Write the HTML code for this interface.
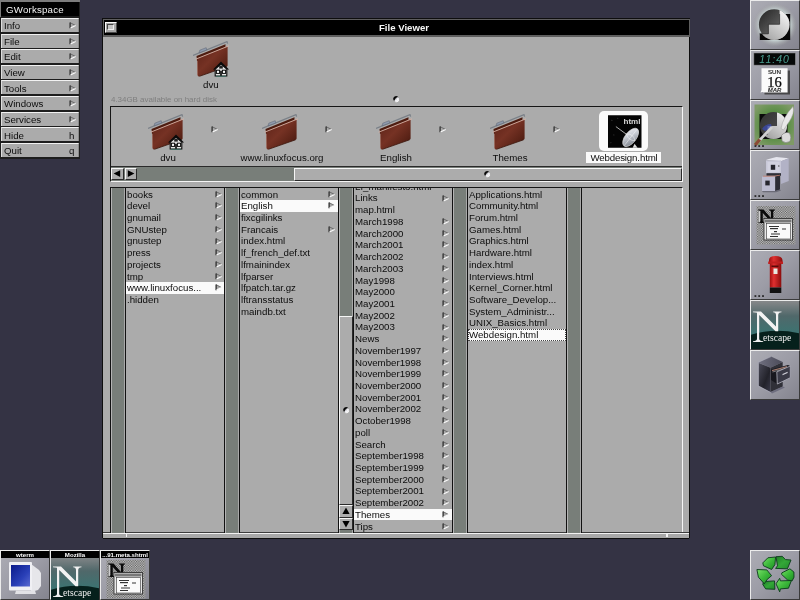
<!DOCTYPE html><html><head><meta charset="utf-8"><style>
*{margin:0;padding:0;box-sizing:border-box}
html,body{width:800px;height:600px;overflow:hidden;background:#343344;font-family:"Liberation Sans",sans-serif}
.a{position:absolute}
svg.a{will-change:transform}
.t{position:absolute;white-space:nowrap;font-size:9.7px;color:#0c0c0c;line-height:1;will-change:transform}
</style></head><body>
<div class="a" style="left:0.00px;top:0.00px;width:79.60px;height:158.60px;background:#1e1e1e"></div>
<div class="a" style="left:0.00px;top:0.00px;width:79.60px;height:2.00px;background:#7c7c7c"></div>
<div class="a" style="left:0.00px;top:0.00px;width:1.40px;height:17.00px;background:#7c7c7c"></div>
<div class="a" style="left:1.40px;top:2.00px;width:77.40px;height:14.30px;background:#000"></div>
<div class="t" style="left:5.60px;top:5.06px;font-size:9.7px;color:#f4f4f4;letter-spacing:0.2px">GWorkspace</div>
<div class="a" style="left:1.20px;top:17.90px;width:77.40px;height:14.00px;background:#ababab;border-top:1.1px solid #f2f2f2;border-left:1px solid #dedede;border-right:1px solid #8a8a8a"></div>
<div class="t" style="left:4.20px;top:21.16px;font-size:9.7px;">Info</div>
<svg class="a" style="left:69.00px;top:22.00px" width="8" height="8" viewBox="0 0 8 8"><path d="M1 0.5 L6.6 3.4 L1 6.3Z" fill="#a8a8a8"/><path d="M1.1 0.7 L6 3.2" stroke="#5a5a5a" stroke-width="0.8" fill="none"/><path d="M1.1 0.4 L1.1 6.3" stroke="#2e2e2e" stroke-width="1.3" fill="none"/><path d="M1.5 6.0 L6.6 3.4" stroke="#fafafa" stroke-width="1.1" fill="none"/></svg>
<div class="a" style="left:1.20px;top:33.52px;width:77.40px;height:14.00px;background:#ababab;border-top:1.1px solid #f2f2f2;border-left:1px solid #dedede;border-right:1px solid #8a8a8a"></div>
<div class="t" style="left:4.20px;top:36.78px;font-size:9.7px;">File</div>
<svg class="a" style="left:69.00px;top:37.62px" width="8" height="8" viewBox="0 0 8 8"><path d="M1 0.5 L6.6 3.4 L1 6.3Z" fill="#a8a8a8"/><path d="M1.1 0.7 L6 3.2" stroke="#5a5a5a" stroke-width="0.8" fill="none"/><path d="M1.1 0.4 L1.1 6.3" stroke="#2e2e2e" stroke-width="1.3" fill="none"/><path d="M1.5 6.0 L6.6 3.4" stroke="#fafafa" stroke-width="1.1" fill="none"/></svg>
<div class="a" style="left:1.20px;top:49.15px;width:77.40px;height:14.00px;background:#ababab;border-top:1.1px solid #f2f2f2;border-left:1px solid #dedede;border-right:1px solid #8a8a8a"></div>
<div class="t" style="left:4.20px;top:52.41px;font-size:9.7px;">Edit</div>
<svg class="a" style="left:69.00px;top:53.25px" width="8" height="8" viewBox="0 0 8 8"><path d="M1 0.5 L6.6 3.4 L1 6.3Z" fill="#a8a8a8"/><path d="M1.1 0.7 L6 3.2" stroke="#5a5a5a" stroke-width="0.8" fill="none"/><path d="M1.1 0.4 L1.1 6.3" stroke="#2e2e2e" stroke-width="1.3" fill="none"/><path d="M1.5 6.0 L6.6 3.4" stroke="#fafafa" stroke-width="1.1" fill="none"/></svg>
<div class="a" style="left:1.20px;top:64.78px;width:77.40px;height:14.00px;background:#ababab;border-top:1.1px solid #f2f2f2;border-left:1px solid #dedede;border-right:1px solid #8a8a8a"></div>
<div class="t" style="left:4.20px;top:68.03px;font-size:9.7px;">View</div>
<svg class="a" style="left:69.00px;top:68.88px" width="8" height="8" viewBox="0 0 8 8"><path d="M1 0.5 L6.6 3.4 L1 6.3Z" fill="#a8a8a8"/><path d="M1.1 0.7 L6 3.2" stroke="#5a5a5a" stroke-width="0.8" fill="none"/><path d="M1.1 0.4 L1.1 6.3" stroke="#2e2e2e" stroke-width="1.3" fill="none"/><path d="M1.5 6.0 L6.6 3.4" stroke="#fafafa" stroke-width="1.1" fill="none"/></svg>
<div class="a" style="left:1.20px;top:80.40px;width:77.40px;height:14.00px;background:#ababab;border-top:1.1px solid #f2f2f2;border-left:1px solid #dedede;border-right:1px solid #8a8a8a"></div>
<div class="t" style="left:4.20px;top:83.66px;font-size:9.7px;">Tools</div>
<svg class="a" style="left:69.00px;top:84.50px" width="8" height="8" viewBox="0 0 8 8"><path d="M1 0.5 L6.6 3.4 L1 6.3Z" fill="#a8a8a8"/><path d="M1.1 0.7 L6 3.2" stroke="#5a5a5a" stroke-width="0.8" fill="none"/><path d="M1.1 0.4 L1.1 6.3" stroke="#2e2e2e" stroke-width="1.3" fill="none"/><path d="M1.5 6.0 L6.6 3.4" stroke="#fafafa" stroke-width="1.1" fill="none"/></svg>
<div class="a" style="left:1.20px;top:96.03px;width:77.40px;height:14.00px;background:#ababab;border-top:1.1px solid #f2f2f2;border-left:1px solid #dedede;border-right:1px solid #8a8a8a"></div>
<div class="t" style="left:4.20px;top:99.28px;font-size:9.7px;">Windows</div>
<svg class="a" style="left:69.00px;top:100.12px" width="8" height="8" viewBox="0 0 8 8"><path d="M1 0.5 L6.6 3.4 L1 6.3Z" fill="#a8a8a8"/><path d="M1.1 0.7 L6 3.2" stroke="#5a5a5a" stroke-width="0.8" fill="none"/><path d="M1.1 0.4 L1.1 6.3" stroke="#2e2e2e" stroke-width="1.3" fill="none"/><path d="M1.5 6.0 L6.6 3.4" stroke="#fafafa" stroke-width="1.1" fill="none"/></svg>
<div class="a" style="left:1.20px;top:111.65px;width:77.40px;height:14.00px;background:#ababab;border-top:1.1px solid #f2f2f2;border-left:1px solid #dedede;border-right:1px solid #8a8a8a"></div>
<div class="t" style="left:4.20px;top:114.91px;font-size:9.7px;">Services</div>
<svg class="a" style="left:69.00px;top:115.75px" width="8" height="8" viewBox="0 0 8 8"><path d="M1 0.5 L6.6 3.4 L1 6.3Z" fill="#a8a8a8"/><path d="M1.1 0.7 L6 3.2" stroke="#5a5a5a" stroke-width="0.8" fill="none"/><path d="M1.1 0.4 L1.1 6.3" stroke="#2e2e2e" stroke-width="1.3" fill="none"/><path d="M1.5 6.0 L6.6 3.4" stroke="#fafafa" stroke-width="1.1" fill="none"/></svg>
<div class="a" style="left:1.20px;top:127.28px;width:77.40px;height:14.00px;background:#ababab;border-top:1.1px solid #f2f2f2;border-left:1px solid #dedede;border-right:1px solid #8a8a8a"></div>
<div class="t" style="left:4.20px;top:130.53px;font-size:9.7px;">Hide</div>
<div class="t" style="left:69.20px;top:130.53px;font-size:9.7px;">h</div>
<div class="a" style="left:1.20px;top:142.90px;width:77.40px;height:14.00px;background:#ababab;border-top:1.1px solid #f2f2f2;border-left:1px solid #dedede;border-right:1px solid #8a8a8a"></div>
<div class="t" style="left:4.20px;top:146.16px;font-size:9.7px;">Quit</div>
<div class="t" style="left:69.20px;top:146.16px;font-size:9.7px;">q</div>
<div class="a" style="left:102.40px;top:18.40px;width:587.80px;height:520.00px;background:#0e0e0e"></div>
<div class="a" style="left:103.00px;top:18.90px;width:586.60px;height:17.80px;background:#5e5e5e"></div>
<div class="a" style="left:104.00px;top:20.20px;width:584.60px;height:15.00px;background:#000"></div>
<div class="t" style="left:378.60px;top:23.04px;font-size:9.6px;color:#f6f6f6;font-weight:bold">File Viewer</div>
<div class="a" style="left:105.00px;top:21.60px;width:11.50px;height:11.00px;background:#a8a8a8;border-top:1px solid #fafafa;border-left:1px solid #fafafa;border-bottom:1px solid #4a4a4a;border-right:1px solid #4a4a4a"></div>
<div class="a" style="left:107.30px;top:24.20px;width:7.00px;height:5.60px;background:#c4c4c4;border-top:1px solid #444;border-left:1px solid #444;border-bottom:1px solid #eee;border-right:1px solid #eee"></div>
<div class="a" style="left:103.00px;top:36.80px;width:586.40px;height:496.00px;background:#ababab"></div>
<div class="a" style="left:103.00px;top:532.00px;width:586.40px;height:6.50px;background:#a8a8a8;border-top:1px solid #3c3c3c;border-bottom:1.2px solid #0e0e0e"></div>
<div class="a" style="left:103.00px;top:533.20px;width:586.40px;height:1.10px;background:#f2f2f2"></div>
<div class="a" style="left:125.80px;top:533.20px;width:1.20px;height:4.30px;background:#f2f2f2"></div>
<div class="a" style="left:665.60px;top:533.20px;width:0.80px;height:4.30px;background:#444"></div>
<div class="a" style="left:666.40px;top:533.20px;width:1.20px;height:4.30px;background:#f2f2f2"></div>
<svg width="0" height="0" style="position:absolute"><defs>
<linearGradient id="fg" x1="0" y1="0" x2="1" y2="1"><stop offset="0" stop-color="#5a2216"/><stop offset="0.45" stop-color="#763224"/><stop offset="1" stop-color="#42160c"/></linearGradient>
<symbol id="folder" viewBox="0 0 36 36">
<path d="M3.5 15 L32.5 3.2 L32.5 9 L4 20Z" fill="#4e1c10"/>
<path d="M0 14.5 L34 0.6 L34.6 2.6" stroke="#7a8088" stroke-width="1.2" fill="none"/>
<path d="M6 11.8 L6.8 9.2 L13.2 6.7 L13.8 9Z" fill="#8e9aac" stroke="#5a6070" stroke-width="0.5"/>
<path d="M4.4 17.4 L34.6 5.2 L34.6 24.6 Q34.6 25.4 33.6 25.8 L6.4 35.3 Q4.6 35.8 4.6 34Z" fill="url(#fg)"/>
<path d="M4.6 20 L4.6 34" stroke="#a05a48" stroke-width="0.6" opacity="0.7"/>
<path d="M2.6 18.2 L37 4.4" stroke="#d8b4a8" stroke-width="0.9"/>
<path d="M6.4 35.3 L33.6 25.8" stroke="#3a140a" stroke-width="0.8"/>
</symbol>
<symbol id="house" viewBox="0 0 16 16">
<path d="M0 8.6 L8 0.6 L16 8.6 L13.8 8.6 L8 3.4 L2.2 8.6Z" fill="#0a0a0a"/>
<path d="M2.2 8.2 L8 3 L13.8 8.2 L13.8 15 L2.2 15Z" fill="#e4e4e4" stroke="#0a0a0a" stroke-width="1.1"/>
<path d="M6.2 4.6 L9.8 4.6 L9.8 7.6 L6.2 7.6Z" fill="#222"/>
<rect x="3.4" y="9.2" width="3.2" height="3.2" fill="#fafafa" stroke="#0a0a0a" stroke-width="1"/>
<rect x="9.4" y="9.2" width="3.2" height="3.2" fill="#fafafa" stroke="#0a0a0a" stroke-width="1"/>
<rect x="7.1" y="9.8" width="1.8" height="5.2" fill="#1a1a1a"/>
<path d="M3 15.3 L13 15.3" stroke="#3a6a60" stroke-width="1"/>
</symbol>
<symbol id="dimple" viewBox="0 0 8 8"><circle cx="4.2" cy="4.2" r="2.4" fill="#c8c8cc"/><path d="M1.4 4.9 A2.8 2.8 0 0 1 6.2 2.1 Q3.8 2.2 2.4 5.8 Q1.7 5.4 1.4 4.9Z" fill="#080808"/><path d="M3.2 6.9 A2.7 2.7 0 0 0 6.9 3.4 Q6.6 5.6 3.2 6.9Z" fill="#fafafa"/><path d="M3 6.2 Q5.8 5.4 6.3 3" stroke="#f4f4f8" stroke-width="1.4" fill="none"/></symbol>
</defs></svg>
<svg class="a" style="left:192.50px;top:41.00px" width="36" height="36" viewBox="0 0 36 36"><use href="#folder"/></svg>
<svg class="a" style="left:212.80px;top:60.80px" width="16" height="16" viewBox="0 0 16 16"><use href="#house"/></svg>
<div class="t" style="left:202.80px;top:80.35px;font-size:9.7px;">dvu</div>
<div class="t" style="left:110.70px;top:95.54px;font-size:7.95px;color:#7e7e7e">4.34GB available on hard disk</div>
<svg class="a" style="left:392.00px;top:95.00px" width="8" height="8" viewBox="0 0 8 8"><use href="#dimple"/></svg>
<div class="a" style="left:110.00px;top:106.00px;width:572.60px;height:76.00px;border-top:1px solid #161616;border-left:1px solid #161616;border-bottom:1px solid #f6f6f6;border-right:1px solid #f6f6f6"></div>
<svg class="a" style="left:148.00px;top:114.00px" width="36" height="36" viewBox="0 0 36 36"><use href="#folder"/></svg>
<svg class="a" style="left:168.30px;top:133.80px" width="16" height="16" viewBox="0 0 16 16"><use href="#house"/></svg>
<div class="t" style="left:167.50px;top:152.95px;transform:translateX(-50%)">dvu</div>
<svg class="a" style="left:211.00px;top:126.00px" width="8" height="8" viewBox="0 0 8 8"><path d="M1 0.5 L6.6 3.4 L1 6.3Z" fill="#a8a8a8"/><path d="M1.1 0.7 L6 3.2" stroke="#5a5a5a" stroke-width="0.8" fill="none"/><path d="M1.1 0.4 L1.1 6.3" stroke="#2e2e2e" stroke-width="1.3" fill="none"/><path d="M1.5 6.0 L6.6 3.4" stroke="#fafafa" stroke-width="1.1" fill="none"/></svg>
<svg class="a" style="left:262.00px;top:114.00px" width="36" height="36" viewBox="0 0 36 36"><use href="#folder"/></svg>
<div class="t" style="left:281.50px;top:152.95px;transform:translateX(-50%)">www.linuxfocus.org</div>
<svg class="a" style="left:325.00px;top:126.00px" width="8" height="8" viewBox="0 0 8 8"><path d="M1 0.5 L6.6 3.4 L1 6.3Z" fill="#a8a8a8"/><path d="M1.1 0.7 L6 3.2" stroke="#5a5a5a" stroke-width="0.8" fill="none"/><path d="M1.1 0.4 L1.1 6.3" stroke="#2e2e2e" stroke-width="1.3" fill="none"/><path d="M1.5 6.0 L6.6 3.4" stroke="#fafafa" stroke-width="1.1" fill="none"/></svg>
<svg class="a" style="left:376.00px;top:114.00px" width="36" height="36" viewBox="0 0 36 36"><use href="#folder"/></svg>
<div class="t" style="left:395.50px;top:152.95px;transform:translateX(-50%)">English</div>
<svg class="a" style="left:439.00px;top:126.00px" width="8" height="8" viewBox="0 0 8 8"><path d="M1 0.5 L6.6 3.4 L1 6.3Z" fill="#a8a8a8"/><path d="M1.1 0.7 L6 3.2" stroke="#5a5a5a" stroke-width="0.8" fill="none"/><path d="M1.1 0.4 L1.1 6.3" stroke="#2e2e2e" stroke-width="1.3" fill="none"/><path d="M1.5 6.0 L6.6 3.4" stroke="#fafafa" stroke-width="1.1" fill="none"/></svg>
<svg class="a" style="left:490.00px;top:114.00px" width="36" height="36" viewBox="0 0 36 36"><use href="#folder"/></svg>
<div class="t" style="left:509.50px;top:152.95px;transform:translateX(-50%)">Themes</div>
<svg class="a" style="left:553.00px;top:126.00px" width="8" height="8" viewBox="0 0 8 8"><path d="M1 0.5 L6.6 3.4 L1 6.3Z" fill="#a8a8a8"/><path d="M1.1 0.7 L6 3.2" stroke="#5a5a5a" stroke-width="0.8" fill="none"/><path d="M1.1 0.4 L1.1 6.3" stroke="#2e2e2e" stroke-width="1.3" fill="none"/><path d="M1.5 6.0 L6.6 3.4" stroke="#fafafa" stroke-width="1.1" fill="none"/></svg>
<div class="a" style="left:599.40px;top:111.40px;width:49.00px;height:39.30px;background:#fafafa;border-radius:5px"></div>
<svg class="a" style="left:608.00px;top:115.00px" width="33.5" height="33" viewBox="0 0 34 33"><defs><linearGradient id="dg" x1="0" y1="1" x2="1" y2="0"><stop offset="0" stop-color="#707680"/><stop offset="0.6" stop-color="#c8ccd4"/><stop offset="1" stop-color="#f0f0f4"/></linearGradient></defs><rect width="34" height="33" fill="#040404"/><circle cx="4" cy="5" r="0.4" fill="#aaa"/><circle cx="10" cy="3" r="0.35" fill="#999"/><circle cx="6" cy="20" r="0.4" fill="#888"/><circle cx="3" cy="28" r="0.35" fill="#999"/><circle cx="17" cy="8" r="0.35" fill="#888"/><text x="33" y="8.6" font-family="Liberation Sans" font-weight="bold" font-size="8.2" fill="#d8d8d8" text-anchor="end">html</text><path d="M8 11.5 L23 22.5" stroke="#dcdcdc" stroke-width="0.8"/><g transform="rotate(-52 23 22.5)"><ellipse cx="23" cy="22.5" rx="11" ry="5.6" fill="url(#dg)" stroke="#e8e8e8" stroke-width="0.6"/><path d="M12.5 22.5 L33.5 22.5 M23 17 Q19 22.5 23 28 M23 17 Q28 22.5 23 28" stroke="#fafafa" stroke-width="0.45" fill="none"/></g><path d="M25 33 L27 29 L30 33Z" fill="#ddd"/></svg>
<div class="a" style="left:586.00px;top:152.00px;width:75.00px;height:10.70px;background:#fafafa"></div>
<div class="t" style="left:623.50px;top:152.95px;transform:translateX(-50%);letter-spacing:-0.15px">Webdesign.html</div>
<div class="a" style="left:111.00px;top:166.20px;width:571.00px;height:1.00px;background:#2a2a2a"></div>
<div class="a" style="left:111.00px;top:167.20px;width:571.00px;height:13.80px;background:#787e79"></div>
<div class="a" style="left:111.20px;top:167.60px;width:12.60px;height:12.80px;background:#acacac;border-top:1px solid #f6f6f6;border-left:1px solid #f6f6f6;border-bottom:1.2px solid #2a2a2a;border-right:1.2px solid #2a2a2a;"></div>
<svg class="a" style="left:113.20px;top:170.20px" width="8" height="8" viewBox="0 0 8 8"><path d="M0.6 3.6 L7.2 0.2 L7.2 7.0Z" fill="#000"/></svg>
<div class="a" style="left:124.70px;top:167.60px;width:12.60px;height:12.80px;background:#acacac;border-top:1px solid #f6f6f6;border-left:1px solid #f6f6f6;border-bottom:1.2px solid #2a2a2a;border-right:1.2px solid #2a2a2a;"></div>
<svg class="a" style="left:127.10px;top:170.20px" width="8" height="8" viewBox="0 0 8 8"><path d="M7.4 3.6 L0.8 0.2 L0.8 7.0Z" fill="#000"/></svg>
<div class="a" style="left:293.70px;top:167.80px;width:388.60px;height:12.80px;background:#acacac;border-top:1px solid #f6f6f6;border-left:1px solid #f6f6f6;border-bottom:1.2px solid #2a2a2a;border-right:1.2px solid #2a2a2a;"></div>
<svg class="a" style="left:483.00px;top:169.60px" width="8" height="8" viewBox="0 0 8 8"><use href="#dimple"/></svg>
<div class="a" style="left:110.00px;top:187.00px;width:572.60px;height:345.20px;border-top:1px solid #161616;border-left:1px solid #161616;border-right:1px solid #f6f6f6"></div>
<div class="a" style="left:110.00px;top:188.00px;width:1.00px;height:344.60px;background:#111"></div>
<div class="a" style="left:111.00px;top:188.00px;width:14.00px;height:344.60px;background:#787e79;border-left:1px solid #b4b4b4;border-right:1px solid #a8a8a8"></div>
<div class="a" style="left:125.00px;top:188.00px;width:1.00px;height:344.60px;background:#111"></div>
<div class="a" style="left:126.00px;top:188.00px;width:98.00px;height:344.60px;overflow:hidden">
<div class="t" style="left:1px;top:1.56px">books</div>
<svg class="a" style="left:88.50px;top:2.70px" width="8" height="8" viewBox="0 0 8 8"><path d="M1 0.5 L6.6 3.4 L1 6.3Z" fill="#a8a8a8"/><path d="M1.1 0.7 L6 3.2" stroke="#5a5a5a" stroke-width="0.8" fill="none"/><path d="M1.1 0.4 L1.1 6.3" stroke="#2e2e2e" stroke-width="1.3" fill="none"/><path d="M1.5 6.0 L6.6 3.4" stroke="#fafafa" stroke-width="1.1" fill="none"/></svg>
<div class="t" style="left:1px;top:13.28px">devel</div>
<svg class="a" style="left:88.50px;top:14.42px" width="8" height="8" viewBox="0 0 8 8"><path d="M1 0.5 L6.6 3.4 L1 6.3Z" fill="#a8a8a8"/><path d="M1.1 0.7 L6 3.2" stroke="#5a5a5a" stroke-width="0.8" fill="none"/><path d="M1.1 0.4 L1.1 6.3" stroke="#2e2e2e" stroke-width="1.3" fill="none"/><path d="M1.5 6.0 L6.6 3.4" stroke="#fafafa" stroke-width="1.1" fill="none"/></svg>
<div class="t" style="left:1px;top:25.00px">gnumail</div>
<svg class="a" style="left:88.50px;top:26.14px" width="8" height="8" viewBox="0 0 8 8"><path d="M1 0.5 L6.6 3.4 L1 6.3Z" fill="#a8a8a8"/><path d="M1.1 0.7 L6 3.2" stroke="#5a5a5a" stroke-width="0.8" fill="none"/><path d="M1.1 0.4 L1.1 6.3" stroke="#2e2e2e" stroke-width="1.3" fill="none"/><path d="M1.5 6.0 L6.6 3.4" stroke="#fafafa" stroke-width="1.1" fill="none"/></svg>
<div class="t" style="left:1px;top:36.72px">GNUstep</div>
<svg class="a" style="left:88.50px;top:37.86px" width="8" height="8" viewBox="0 0 8 8"><path d="M1 0.5 L6.6 3.4 L1 6.3Z" fill="#a8a8a8"/><path d="M1.1 0.7 L6 3.2" stroke="#5a5a5a" stroke-width="0.8" fill="none"/><path d="M1.1 0.4 L1.1 6.3" stroke="#2e2e2e" stroke-width="1.3" fill="none"/><path d="M1.5 6.0 L6.6 3.4" stroke="#fafafa" stroke-width="1.1" fill="none"/></svg>
<div class="t" style="left:1px;top:48.44px">gnustep</div>
<svg class="a" style="left:88.50px;top:49.58px" width="8" height="8" viewBox="0 0 8 8"><path d="M1 0.5 L6.6 3.4 L1 6.3Z" fill="#a8a8a8"/><path d="M1.1 0.7 L6 3.2" stroke="#5a5a5a" stroke-width="0.8" fill="none"/><path d="M1.1 0.4 L1.1 6.3" stroke="#2e2e2e" stroke-width="1.3" fill="none"/><path d="M1.5 6.0 L6.6 3.4" stroke="#fafafa" stroke-width="1.1" fill="none"/></svg>
<div class="t" style="left:1px;top:60.16px">press</div>
<svg class="a" style="left:88.50px;top:61.30px" width="8" height="8" viewBox="0 0 8 8"><path d="M1 0.5 L6.6 3.4 L1 6.3Z" fill="#a8a8a8"/><path d="M1.1 0.7 L6 3.2" stroke="#5a5a5a" stroke-width="0.8" fill="none"/><path d="M1.1 0.4 L1.1 6.3" stroke="#2e2e2e" stroke-width="1.3" fill="none"/><path d="M1.5 6.0 L6.6 3.4" stroke="#fafafa" stroke-width="1.1" fill="none"/></svg>
<div class="t" style="left:1px;top:71.88px">projects</div>
<svg class="a" style="left:88.50px;top:73.02px" width="8" height="8" viewBox="0 0 8 8"><path d="M1 0.5 L6.6 3.4 L1 6.3Z" fill="#a8a8a8"/><path d="M1.1 0.7 L6 3.2" stroke="#5a5a5a" stroke-width="0.8" fill="none"/><path d="M1.1 0.4 L1.1 6.3" stroke="#2e2e2e" stroke-width="1.3" fill="none"/><path d="M1.5 6.0 L6.6 3.4" stroke="#fafafa" stroke-width="1.1" fill="none"/></svg>
<div class="t" style="left:1px;top:83.60px">tmp</div>
<svg class="a" style="left:88.50px;top:84.74px" width="8" height="8" viewBox="0 0 8 8"><path d="M1 0.5 L6.6 3.4 L1 6.3Z" fill="#a8a8a8"/><path d="M1.1 0.7 L6 3.2" stroke="#5a5a5a" stroke-width="0.8" fill="none"/><path d="M1.1 0.4 L1.1 6.3" stroke="#2e2e2e" stroke-width="1.3" fill="none"/><path d="M1.5 6.0 L6.6 3.4" stroke="#fafafa" stroke-width="1.1" fill="none"/></svg>
<div class="a" style="left:0;top:94.06px;width:98.00px;height:11.72px;background:#fafafa;"></div>
<div class="t" style="left:1px;top:95.31px">www.linuxfocus...</div>
<svg class="a" style="left:88.50px;top:96.46px" width="8" height="8" viewBox="0 0 8 8"><path d="M1 0.5 L6.6 3.4 L1 6.3Z" fill="#a8a8a8"/><path d="M1.1 0.7 L6 3.2" stroke="#5a5a5a" stroke-width="0.8" fill="none"/><path d="M1.1 0.4 L1.1 6.3" stroke="#2e2e2e" stroke-width="1.3" fill="none"/><path d="M1.5 6.0 L6.6 3.4" stroke="#fafafa" stroke-width="1.1" fill="none"/></svg>
<div class="t" style="left:1px;top:107.04px">.hidden</div>
</div>
<div class="a" style="left:224.00px;top:188.00px;width:1.00px;height:344.60px;background:#111"></div>
<div class="a" style="left:225.00px;top:188.00px;width:14.00px;height:344.60px;background:#787e79;border-left:1px solid #b4b4b4;border-right:1px solid #a8a8a8"></div>
<div class="a" style="left:239.00px;top:188.00px;width:1.00px;height:344.60px;background:#111"></div>
<div class="a" style="left:240.00px;top:188.00px;width:97.90px;height:344.60px;overflow:hidden">
<div class="t" style="left:1px;top:1.56px">common</div>
<svg class="a" style="left:88.40px;top:2.70px" width="8" height="8" viewBox="0 0 8 8"><path d="M1 0.5 L6.6 3.4 L1 6.3Z" fill="#a8a8a8"/><path d="M1.1 0.7 L6 3.2" stroke="#5a5a5a" stroke-width="0.8" fill="none"/><path d="M1.1 0.4 L1.1 6.3" stroke="#2e2e2e" stroke-width="1.3" fill="none"/><path d="M1.5 6.0 L6.6 3.4" stroke="#fafafa" stroke-width="1.1" fill="none"/></svg>
<div class="a" style="left:0;top:12.02px;width:97.90px;height:11.72px;background:#fafafa;"></div>
<div class="t" style="left:1px;top:13.28px">English</div>
<svg class="a" style="left:88.40px;top:14.42px" width="8" height="8" viewBox="0 0 8 8"><path d="M1 0.5 L6.6 3.4 L1 6.3Z" fill="#a8a8a8"/><path d="M1.1 0.7 L6 3.2" stroke="#5a5a5a" stroke-width="0.8" fill="none"/><path d="M1.1 0.4 L1.1 6.3" stroke="#2e2e2e" stroke-width="1.3" fill="none"/><path d="M1.5 6.0 L6.6 3.4" stroke="#fafafa" stroke-width="1.1" fill="none"/></svg>
<div class="t" style="left:1px;top:25.00px">fixcgilinks</div>
<div class="t" style="left:1px;top:36.72px">Francais</div>
<svg class="a" style="left:88.40px;top:37.86px" width="8" height="8" viewBox="0 0 8 8"><path d="M1 0.5 L6.6 3.4 L1 6.3Z" fill="#a8a8a8"/><path d="M1.1 0.7 L6 3.2" stroke="#5a5a5a" stroke-width="0.8" fill="none"/><path d="M1.1 0.4 L1.1 6.3" stroke="#2e2e2e" stroke-width="1.3" fill="none"/><path d="M1.5 6.0 L6.6 3.4" stroke="#fafafa" stroke-width="1.1" fill="none"/></svg>
<div class="t" style="left:1px;top:48.44px">index.html</div>
<div class="t" style="left:1px;top:60.16px">lf_french_def.txt</div>
<div class="t" style="left:1px;top:71.88px">lfmainindex</div>
<div class="t" style="left:1px;top:83.60px">lfparser</div>
<div class="t" style="left:1px;top:95.31px">lfpatch.tar.gz</div>
<div class="t" style="left:1px;top:107.04px">lftransstatus</div>
<div class="t" style="left:1px;top:118.75px">maindb.txt</div>
</div>
<div class="a" style="left:337.90px;top:188.00px;width:1.00px;height:344.60px;background:#111"></div>
<div class="a" style="left:338.90px;top:188.00px;width:14.00px;height:344.60px;background:#787e79;border-left:1px solid #b4b4b4;border-right:1px solid #a8a8a8"></div>
<div class="a" style="left:352.90px;top:188.00px;width:1.00px;height:344.60px;background:#111"></div>
<div class="a" style="left:353.90px;top:188.00px;width:98.10px;height:344.60px;overflow:hidden">
<div class="t" style="left:1px;top:-6.27px">Lf_manifesto.html</div>
<div class="t" style="left:1px;top:5.45px">Links</div>
<svg class="a" style="left:88.60px;top:6.60px" width="8" height="8" viewBox="0 0 8 8"><path d="M1 0.5 L6.6 3.4 L1 6.3Z" fill="#a8a8a8"/><path d="M1.1 0.7 L6 3.2" stroke="#5a5a5a" stroke-width="0.8" fill="none"/><path d="M1.1 0.4 L1.1 6.3" stroke="#2e2e2e" stroke-width="1.3" fill="none"/><path d="M1.5 6.0 L6.6 3.4" stroke="#fafafa" stroke-width="1.1" fill="none"/></svg>
<div class="t" style="left:1px;top:17.17px">map.html</div>
<div class="t" style="left:1px;top:28.89px">March1998</div>
<svg class="a" style="left:88.60px;top:30.04px" width="8" height="8" viewBox="0 0 8 8"><path d="M1 0.5 L6.6 3.4 L1 6.3Z" fill="#a8a8a8"/><path d="M1.1 0.7 L6 3.2" stroke="#5a5a5a" stroke-width="0.8" fill="none"/><path d="M1.1 0.4 L1.1 6.3" stroke="#2e2e2e" stroke-width="1.3" fill="none"/><path d="M1.5 6.0 L6.6 3.4" stroke="#fafafa" stroke-width="1.1" fill="none"/></svg>
<div class="t" style="left:1px;top:40.61px">March2000</div>
<svg class="a" style="left:88.60px;top:41.76px" width="8" height="8" viewBox="0 0 8 8"><path d="M1 0.5 L6.6 3.4 L1 6.3Z" fill="#a8a8a8"/><path d="M1.1 0.7 L6 3.2" stroke="#5a5a5a" stroke-width="0.8" fill="none"/><path d="M1.1 0.4 L1.1 6.3" stroke="#2e2e2e" stroke-width="1.3" fill="none"/><path d="M1.5 6.0 L6.6 3.4" stroke="#fafafa" stroke-width="1.1" fill="none"/></svg>
<div class="t" style="left:1px;top:52.33px">March2001</div>
<svg class="a" style="left:88.60px;top:53.48px" width="8" height="8" viewBox="0 0 8 8"><path d="M1 0.5 L6.6 3.4 L1 6.3Z" fill="#a8a8a8"/><path d="M1.1 0.7 L6 3.2" stroke="#5a5a5a" stroke-width="0.8" fill="none"/><path d="M1.1 0.4 L1.1 6.3" stroke="#2e2e2e" stroke-width="1.3" fill="none"/><path d="M1.5 6.0 L6.6 3.4" stroke="#fafafa" stroke-width="1.1" fill="none"/></svg>
<div class="t" style="left:1px;top:64.06px">March2002</div>
<svg class="a" style="left:88.60px;top:65.20px" width="8" height="8" viewBox="0 0 8 8"><path d="M1 0.5 L6.6 3.4 L1 6.3Z" fill="#a8a8a8"/><path d="M1.1 0.7 L6 3.2" stroke="#5a5a5a" stroke-width="0.8" fill="none"/><path d="M1.1 0.4 L1.1 6.3" stroke="#2e2e2e" stroke-width="1.3" fill="none"/><path d="M1.5 6.0 L6.6 3.4" stroke="#fafafa" stroke-width="1.1" fill="none"/></svg>
<div class="t" style="left:1px;top:75.77px">March2003</div>
<svg class="a" style="left:88.60px;top:76.92px" width="8" height="8" viewBox="0 0 8 8"><path d="M1 0.5 L6.6 3.4 L1 6.3Z" fill="#a8a8a8"/><path d="M1.1 0.7 L6 3.2" stroke="#5a5a5a" stroke-width="0.8" fill="none"/><path d="M1.1 0.4 L1.1 6.3" stroke="#2e2e2e" stroke-width="1.3" fill="none"/><path d="M1.5 6.0 L6.6 3.4" stroke="#fafafa" stroke-width="1.1" fill="none"/></svg>
<div class="t" style="left:1px;top:87.50px">May1998</div>
<svg class="a" style="left:88.60px;top:88.64px" width="8" height="8" viewBox="0 0 8 8"><path d="M1 0.5 L6.6 3.4 L1 6.3Z" fill="#a8a8a8"/><path d="M1.1 0.7 L6 3.2" stroke="#5a5a5a" stroke-width="0.8" fill="none"/><path d="M1.1 0.4 L1.1 6.3" stroke="#2e2e2e" stroke-width="1.3" fill="none"/><path d="M1.5 6.0 L6.6 3.4" stroke="#fafafa" stroke-width="1.1" fill="none"/></svg>
<div class="t" style="left:1px;top:99.21px">May2000</div>
<svg class="a" style="left:88.60px;top:100.36px" width="8" height="8" viewBox="0 0 8 8"><path d="M1 0.5 L6.6 3.4 L1 6.3Z" fill="#a8a8a8"/><path d="M1.1 0.7 L6 3.2" stroke="#5a5a5a" stroke-width="0.8" fill="none"/><path d="M1.1 0.4 L1.1 6.3" stroke="#2e2e2e" stroke-width="1.3" fill="none"/><path d="M1.5 6.0 L6.6 3.4" stroke="#fafafa" stroke-width="1.1" fill="none"/></svg>
<div class="t" style="left:1px;top:110.94px">May2001</div>
<svg class="a" style="left:88.60px;top:112.08px" width="8" height="8" viewBox="0 0 8 8"><path d="M1 0.5 L6.6 3.4 L1 6.3Z" fill="#a8a8a8"/><path d="M1.1 0.7 L6 3.2" stroke="#5a5a5a" stroke-width="0.8" fill="none"/><path d="M1.1 0.4 L1.1 6.3" stroke="#2e2e2e" stroke-width="1.3" fill="none"/><path d="M1.5 6.0 L6.6 3.4" stroke="#fafafa" stroke-width="1.1" fill="none"/></svg>
<div class="t" style="left:1px;top:122.65px">May2002</div>
<svg class="a" style="left:88.60px;top:123.80px" width="8" height="8" viewBox="0 0 8 8"><path d="M1 0.5 L6.6 3.4 L1 6.3Z" fill="#a8a8a8"/><path d="M1.1 0.7 L6 3.2" stroke="#5a5a5a" stroke-width="0.8" fill="none"/><path d="M1.1 0.4 L1.1 6.3" stroke="#2e2e2e" stroke-width="1.3" fill="none"/><path d="M1.5 6.0 L6.6 3.4" stroke="#fafafa" stroke-width="1.1" fill="none"/></svg>
<div class="t" style="left:1px;top:134.38px">May2003</div>
<svg class="a" style="left:88.60px;top:135.52px" width="8" height="8" viewBox="0 0 8 8"><path d="M1 0.5 L6.6 3.4 L1 6.3Z" fill="#a8a8a8"/><path d="M1.1 0.7 L6 3.2" stroke="#5a5a5a" stroke-width="0.8" fill="none"/><path d="M1.1 0.4 L1.1 6.3" stroke="#2e2e2e" stroke-width="1.3" fill="none"/><path d="M1.5 6.0 L6.6 3.4" stroke="#fafafa" stroke-width="1.1" fill="none"/></svg>
<div class="t" style="left:1px;top:146.10px">News</div>
<svg class="a" style="left:88.60px;top:147.24px" width="8" height="8" viewBox="0 0 8 8"><path d="M1 0.5 L6.6 3.4 L1 6.3Z" fill="#a8a8a8"/><path d="M1.1 0.7 L6 3.2" stroke="#5a5a5a" stroke-width="0.8" fill="none"/><path d="M1.1 0.4 L1.1 6.3" stroke="#2e2e2e" stroke-width="1.3" fill="none"/><path d="M1.5 6.0 L6.6 3.4" stroke="#fafafa" stroke-width="1.1" fill="none"/></svg>
<div class="t" style="left:1px;top:157.81px">November1997</div>
<svg class="a" style="left:88.60px;top:158.96px" width="8" height="8" viewBox="0 0 8 8"><path d="M1 0.5 L6.6 3.4 L1 6.3Z" fill="#a8a8a8"/><path d="M1.1 0.7 L6 3.2" stroke="#5a5a5a" stroke-width="0.8" fill="none"/><path d="M1.1 0.4 L1.1 6.3" stroke="#2e2e2e" stroke-width="1.3" fill="none"/><path d="M1.5 6.0 L6.6 3.4" stroke="#fafafa" stroke-width="1.1" fill="none"/></svg>
<div class="t" style="left:1px;top:169.53px">November1998</div>
<svg class="a" style="left:88.60px;top:170.68px" width="8" height="8" viewBox="0 0 8 8"><path d="M1 0.5 L6.6 3.4 L1 6.3Z" fill="#a8a8a8"/><path d="M1.1 0.7 L6 3.2" stroke="#5a5a5a" stroke-width="0.8" fill="none"/><path d="M1.1 0.4 L1.1 6.3" stroke="#2e2e2e" stroke-width="1.3" fill="none"/><path d="M1.5 6.0 L6.6 3.4" stroke="#fafafa" stroke-width="1.1" fill="none"/></svg>
<div class="t" style="left:1px;top:181.25px">November1999</div>
<svg class="a" style="left:88.60px;top:182.40px" width="8" height="8" viewBox="0 0 8 8"><path d="M1 0.5 L6.6 3.4 L1 6.3Z" fill="#a8a8a8"/><path d="M1.1 0.7 L6 3.2" stroke="#5a5a5a" stroke-width="0.8" fill="none"/><path d="M1.1 0.4 L1.1 6.3" stroke="#2e2e2e" stroke-width="1.3" fill="none"/><path d="M1.5 6.0 L6.6 3.4" stroke="#fafafa" stroke-width="1.1" fill="none"/></svg>
<div class="t" style="left:1px;top:192.98px">November2000</div>
<svg class="a" style="left:88.60px;top:194.12px" width="8" height="8" viewBox="0 0 8 8"><path d="M1 0.5 L6.6 3.4 L1 6.3Z" fill="#a8a8a8"/><path d="M1.1 0.7 L6 3.2" stroke="#5a5a5a" stroke-width="0.8" fill="none"/><path d="M1.1 0.4 L1.1 6.3" stroke="#2e2e2e" stroke-width="1.3" fill="none"/><path d="M1.5 6.0 L6.6 3.4" stroke="#fafafa" stroke-width="1.1" fill="none"/></svg>
<div class="t" style="left:1px;top:204.69px">November2001</div>
<svg class="a" style="left:88.60px;top:205.84px" width="8" height="8" viewBox="0 0 8 8"><path d="M1 0.5 L6.6 3.4 L1 6.3Z" fill="#a8a8a8"/><path d="M1.1 0.7 L6 3.2" stroke="#5a5a5a" stroke-width="0.8" fill="none"/><path d="M1.1 0.4 L1.1 6.3" stroke="#2e2e2e" stroke-width="1.3" fill="none"/><path d="M1.5 6.0 L6.6 3.4" stroke="#fafafa" stroke-width="1.1" fill="none"/></svg>
<div class="t" style="left:1px;top:216.41px">November2002</div>
<svg class="a" style="left:88.60px;top:217.56px" width="8" height="8" viewBox="0 0 8 8"><path d="M1 0.5 L6.6 3.4 L1 6.3Z" fill="#a8a8a8"/><path d="M1.1 0.7 L6 3.2" stroke="#5a5a5a" stroke-width="0.8" fill="none"/><path d="M1.1 0.4 L1.1 6.3" stroke="#2e2e2e" stroke-width="1.3" fill="none"/><path d="M1.5 6.0 L6.6 3.4" stroke="#fafafa" stroke-width="1.1" fill="none"/></svg>
<div class="t" style="left:1px;top:228.13px">October1998</div>
<svg class="a" style="left:88.60px;top:229.28px" width="8" height="8" viewBox="0 0 8 8"><path d="M1 0.5 L6.6 3.4 L1 6.3Z" fill="#a8a8a8"/><path d="M1.1 0.7 L6 3.2" stroke="#5a5a5a" stroke-width="0.8" fill="none"/><path d="M1.1 0.4 L1.1 6.3" stroke="#2e2e2e" stroke-width="1.3" fill="none"/><path d="M1.5 6.0 L6.6 3.4" stroke="#fafafa" stroke-width="1.1" fill="none"/></svg>
<div class="t" style="left:1px;top:239.86px">poll</div>
<svg class="a" style="left:88.60px;top:241.00px" width="8" height="8" viewBox="0 0 8 8"><path d="M1 0.5 L6.6 3.4 L1 6.3Z" fill="#a8a8a8"/><path d="M1.1 0.7 L6 3.2" stroke="#5a5a5a" stroke-width="0.8" fill="none"/><path d="M1.1 0.4 L1.1 6.3" stroke="#2e2e2e" stroke-width="1.3" fill="none"/><path d="M1.5 6.0 L6.6 3.4" stroke="#fafafa" stroke-width="1.1" fill="none"/></svg>
<div class="t" style="left:1px;top:251.58px">Search</div>
<svg class="a" style="left:88.60px;top:252.72px" width="8" height="8" viewBox="0 0 8 8"><path d="M1 0.5 L6.6 3.4 L1 6.3Z" fill="#a8a8a8"/><path d="M1.1 0.7 L6 3.2" stroke="#5a5a5a" stroke-width="0.8" fill="none"/><path d="M1.1 0.4 L1.1 6.3" stroke="#2e2e2e" stroke-width="1.3" fill="none"/><path d="M1.5 6.0 L6.6 3.4" stroke="#fafafa" stroke-width="1.1" fill="none"/></svg>
<div class="t" style="left:1px;top:263.29px">September1998</div>
<svg class="a" style="left:88.60px;top:264.44px" width="8" height="8" viewBox="0 0 8 8"><path d="M1 0.5 L6.6 3.4 L1 6.3Z" fill="#a8a8a8"/><path d="M1.1 0.7 L6 3.2" stroke="#5a5a5a" stroke-width="0.8" fill="none"/><path d="M1.1 0.4 L1.1 6.3" stroke="#2e2e2e" stroke-width="1.3" fill="none"/><path d="M1.5 6.0 L6.6 3.4" stroke="#fafafa" stroke-width="1.1" fill="none"/></svg>
<div class="t" style="left:1px;top:275.01px">September1999</div>
<svg class="a" style="left:88.60px;top:276.16px" width="8" height="8" viewBox="0 0 8 8"><path d="M1 0.5 L6.6 3.4 L1 6.3Z" fill="#a8a8a8"/><path d="M1.1 0.7 L6 3.2" stroke="#5a5a5a" stroke-width="0.8" fill="none"/><path d="M1.1 0.4 L1.1 6.3" stroke="#2e2e2e" stroke-width="1.3" fill="none"/><path d="M1.5 6.0 L6.6 3.4" stroke="#fafafa" stroke-width="1.1" fill="none"/></svg>
<div class="t" style="left:1px;top:286.74px">September2000</div>
<svg class="a" style="left:88.60px;top:287.88px" width="8" height="8" viewBox="0 0 8 8"><path d="M1 0.5 L6.6 3.4 L1 6.3Z" fill="#a8a8a8"/><path d="M1.1 0.7 L6 3.2" stroke="#5a5a5a" stroke-width="0.8" fill="none"/><path d="M1.1 0.4 L1.1 6.3" stroke="#2e2e2e" stroke-width="1.3" fill="none"/><path d="M1.5 6.0 L6.6 3.4" stroke="#fafafa" stroke-width="1.1" fill="none"/></svg>
<div class="t" style="left:1px;top:298.46px">September2001</div>
<svg class="a" style="left:88.60px;top:299.60px" width="8" height="8" viewBox="0 0 8 8"><path d="M1 0.5 L6.6 3.4 L1 6.3Z" fill="#a8a8a8"/><path d="M1.1 0.7 L6 3.2" stroke="#5a5a5a" stroke-width="0.8" fill="none"/><path d="M1.1 0.4 L1.1 6.3" stroke="#2e2e2e" stroke-width="1.3" fill="none"/><path d="M1.5 6.0 L6.6 3.4" stroke="#fafafa" stroke-width="1.1" fill="none"/></svg>
<div class="t" style="left:1px;top:310.17px">September2002</div>
<svg class="a" style="left:88.60px;top:311.32px" width="8" height="8" viewBox="0 0 8 8"><path d="M1 0.5 L6.6 3.4 L1 6.3Z" fill="#a8a8a8"/><path d="M1.1 0.7 L6 3.2" stroke="#5a5a5a" stroke-width="0.8" fill="none"/><path d="M1.1 0.4 L1.1 6.3" stroke="#2e2e2e" stroke-width="1.3" fill="none"/><path d="M1.5 6.0 L6.6 3.4" stroke="#fafafa" stroke-width="1.1" fill="none"/></svg>
<div class="a" style="left:0;top:320.64px;width:98.10px;height:11.72px;background:#fafafa;"></div>
<div class="t" style="left:1px;top:321.89px">Themes</div>
<svg class="a" style="left:88.60px;top:323.04px" width="8" height="8" viewBox="0 0 8 8"><path d="M1 0.5 L6.6 3.4 L1 6.3Z" fill="#a8a8a8"/><path d="M1.1 0.7 L6 3.2" stroke="#5a5a5a" stroke-width="0.8" fill="none"/><path d="M1.1 0.4 L1.1 6.3" stroke="#2e2e2e" stroke-width="1.3" fill="none"/><path d="M1.5 6.0 L6.6 3.4" stroke="#fafafa" stroke-width="1.1" fill="none"/></svg>
<div class="t" style="left:1px;top:333.62px">Tips</div>
<svg class="a" style="left:88.60px;top:334.76px" width="8" height="8" viewBox="0 0 8 8"><path d="M1 0.5 L6.6 3.4 L1 6.3Z" fill="#a8a8a8"/><path d="M1.1 0.7 L6 3.2" stroke="#5a5a5a" stroke-width="0.8" fill="none"/><path d="M1.1 0.4 L1.1 6.3" stroke="#2e2e2e" stroke-width="1.3" fill="none"/><path d="M1.5 6.0 L6.6 3.4" stroke="#fafafa" stroke-width="1.1" fill="none"/></svg>
</div>
<div class="a" style="left:452.00px;top:188.00px;width:1.00px;height:344.60px;background:#111"></div>
<div class="a" style="left:453.00px;top:188.00px;width:14.00px;height:344.60px;background:#787e79;border-left:1px solid #b4b4b4;border-right:1px solid #a8a8a8"></div>
<div class="a" style="left:467.00px;top:188.00px;width:1.00px;height:344.60px;background:#111"></div>
<div class="a" style="left:468.00px;top:188.00px;width:98.00px;height:344.60px;overflow:hidden">
<div class="t" style="left:1px;top:1.56px">Applications.html</div>
<div class="t" style="left:1px;top:13.28px">Community.html</div>
<div class="t" style="left:1px;top:25.00px">Forum.html</div>
<div class="t" style="left:1px;top:36.72px">Games.html</div>
<div class="t" style="left:1px;top:48.44px">Graphics.html</div>
<div class="t" style="left:1px;top:60.16px">Hardware.html</div>
<div class="t" style="left:1px;top:71.88px">index.html</div>
<div class="t" style="left:1px;top:83.60px">Interviews.html</div>
<div class="t" style="left:1px;top:95.31px">Kernel_Corner.html</div>
<div class="t" style="left:1px;top:107.04px">Software_Develop...</div>
<div class="t" style="left:1px;top:118.75px">System_Administr...</div>
<div class="t" style="left:1px;top:130.48px">UNIX_Basics.html</div>
<div class="a" style="left:0;top:140.94px;width:98.00px;height:11.72px;background:#fafafa;outline:1px dotted #444;outline-offset:-1px;"></div>
<div class="t" style="left:1px;top:142.20px">Webdesign.html</div>
</div>
<div class="a" style="left:566.00px;top:188.00px;width:1.00px;height:344.60px;background:#111"></div>
<div class="a" style="left:567.00px;top:188.00px;width:14.00px;height:344.60px;background:#787e79;border-left:1px solid #b4b4b4;border-right:1px solid #a8a8a8"></div>
<div class="a" style="left:581.00px;top:188.00px;width:1.00px;height:344.60px;background:#111"></div>
<div class="a" style="left:582.00px;top:188.00px;width:100.00px;height:344.60px;overflow:hidden">
</div>
<div class="a" style="left:339.00px;top:316.00px;width:13.50px;height:188.60px;background:#acacac;border-top:1px solid #f6f6f6;border-left:1px solid #f6f6f6;border-bottom:1.2px solid #2a2a2a;border-right:1.2px solid #2a2a2a;"></div>
<svg class="a" style="left:341.60px;top:405.50px" width="8" height="8" viewBox="0 0 8 8"><use href="#dimple"/></svg>
<div class="a" style="left:339.00px;top:505.00px;width:13.50px;height:12.60px;background:#acacac;border-top:1px solid #f6f6f6;border-left:1px solid #f6f6f6;border-bottom:1.2px solid #2a2a2a;border-right:1.2px solid #2a2a2a;"></div>
<svg class="a" style="left:341.80px;top:507.20px" width="8" height="8" viewBox="0 0 8 8"><path d="M4 0.4 L7.6 7 L0.4 7Z" fill="#000"/></svg>
<div class="a" style="left:339.00px;top:517.60px;width:13.50px;height:12.60px;background:#acacac;border-top:1px solid #f6f6f6;border-left:1px solid #f6f6f6;border-bottom:1.2px solid #2a2a2a;border-right:1.2px solid #2a2a2a;"></div>
<svg class="a" style="left:341.80px;top:519.80px" width="8" height="8" viewBox="0 0 8 8"><path d="M4 7.6 L7.6 1 L0.4 1Z" fill="#000"/></svg>
<div class="a" style="left:750.00px;top:0.00px;width:50.00px;height:50.00px;background:linear-gradient(135deg,#acacb4 0%,#9c9ca6 50%,#84848e 100%);border-top:1.2px solid #ececec;border-left:1.8px solid #ececec;border-bottom:1px solid #3a3a3a;border-right:1px solid #3a3a3a;"></div>
<svg class="a" style="left:750.00px;top:0.00px" width="50" height="50" viewBox="0 0 50 50">
<defs>
<radialGradient id="glow" cx="0.5" cy="0.5" r="0.5"><stop offset="0" stop-color="#e8f4f4"/><stop offset="0.7" stop-color="#c4d0d0"/><stop offset="1" stop-color="#a0a0a0" stop-opacity="0"/></radialGradient>
<linearGradient id="gwd" x1="0.2" y1="0.1" x2="0.8" y2="0.7"><stop offset="0" stop-color="#1e1e1e"/><stop offset="1" stop-color="#7a7a7a"/></linearGradient>
<linearGradient id="gwl" x1="0.8" y1="0.2" x2="0.2" y2="1"><stop offset="0" stop-color="#ffffff"/><stop offset="0.6" stop-color="#b8b8b8"/><stop offset="1" stop-color="#8a8a8a"/></linearGradient>
<clipPath id="gwc"><circle cx="24.2" cy="24.6" r="15.3"/></clipPath>
</defs>
<circle cx="25" cy="25" r="22" fill="url(#glow)"/>
<path d="M29.6 13.9 L40.2 13.9 L40.2 40 L9.8 40 L9.8 33.8 L18.4 33.8 L18.4 24.3 L29.6 24.3Z" fill="#080808"/>
<g clip-path="url(#gwc)">
<rect x="0" y="0" width="50" height="50" fill="url(#gwd)"/>
<path d="M29.6 0 L50 0 L50 50 L0 50 L0 33.8 L18.4 33.8 L18.4 24.3 L29.6 24.3Z" fill="url(#gwl)"/>
</g>
<path d="M29.6 14 L29.6 24.3 L18.4 24.3 L18.4 33.8 L9.5 33.8" stroke="#111" stroke-width="0.6" fill="none"/>
</svg>
<div class="a" style="left:750.00px;top:50.00px;width:50.00px;height:50.00px;background:linear-gradient(135deg,#acacb4 0%,#9c9ca6 50%,#84848e 100%);border-top:1.2px solid #ececec;border-left:1.8px solid #ececec;border-bottom:1px solid #3a3a3a;border-right:1px solid #3a3a3a;"></div>
<svg class="a" style="left:750.00px;top:50.00px" width="50" height="50" viewBox="0 0 50 50">
<rect x="3.9" y="3" width="41.4" height="12.1" fill="#060808" stroke="#8a8a8a" stroke-width="0.5"/>
<text x="24.6" y="13.2" text-anchor="middle" font-family="Liberation Sans" font-style="italic" font-size="10.5" letter-spacing="1" fill="#4a9e90">11:40</text>
<path d="M14 20.5 L40 20.5 L40 44.5 L14.5 44.5Z" fill="#3a3a3a" opacity="0.85"/>
<path d="M11.5 18.2 L37.6 18.2 L37.6 42.5 L14 42.5 Q12.5 41.5 10.5 42.6 L11.5 40Z" fill="#fbfbfb"/>
<text x="24.5" y="24.3" text-anchor="middle" font-family="Liberation Sans" font-size="6.2" fill="#111" stroke="#111" stroke-width="0.15">SUN</text>
<text x="24.5" y="36.6" text-anchor="middle" font-family="Liberation Serif" font-size="14.5" fill="#0a0a0a" stroke="#0a0a0a" stroke-width="0.25">16</text>
<text x="24.5" y="41.6" text-anchor="middle" font-family="Liberation Sans" font-weight="bold" font-style="italic" font-size="6" fill="#222">MAR</text>
</svg>
<div class="a" style="left:750.00px;top:100.00px;width:50.00px;height:50.00px;background:linear-gradient(135deg,#acacb4 0%,#9c9ca6 50%,#84848e 100%);border-top:1.2px solid #ececec;border-left:1.8px solid #ececec;border-bottom:1px solid #3a3a3a;border-right:1px solid #3a3a3a;"></div>
<svg class="a" style="left:750.00px;top:100.00px" width="50" height="50" viewBox="0 0 50 50">
<defs>
<linearGradient id="pl" x1="0.8" y1="0.2" x2="0.2" y2="1"><stop offset="0" stop-color="#ffffff"/><stop offset="0.5" stop-color="#c0c0c0"/><stop offset="1" stop-color="#7a7a7a"/></linearGradient>
<linearGradient id="pgd" x1="0" y1="0" x2="1" y2="1"><stop offset="0" stop-color="#222"/><stop offset="1" stop-color="#666"/></linearGradient>
<radialGradient id="pgr" cx="0.5" cy="0.5" r="0.6"><stop offset="0.4" stop-color="#4e8a3a"/><stop offset="1" stop-color="#7e9a66"/></radialGradient>
<clipPath id="pc"><circle cx="23.5" cy="25.5" r="13.6"/></clipPath>
</defs>
<rect x="4.5" y="4.5" width="39.5" height="40.5" fill="url(#pgr)"/>
<rect x="9.5" y="14" width="28" height="25" fill="#0a0a0a"/>
<g clip-path="url(#pc)">
<rect x="0" y="0" width="50" height="50" fill="url(#pgd)"/>
<path d="M27 0 L50 0 L50 50 L0 50 L0 35 L17.5 35 L17.5 26 L27 26Z" fill="url(#pl)"/>
</g>
<path d="M12 29 Q15 24 21 24 L22 28 L15 31Z" fill="#3a4ab0" opacity="0.75"/>
<path d="M6.5 43.5 L22 27" stroke="#d0d0d0" stroke-width="2.6"/>
<path d="M5.2 45 L9.8 39.5" stroke="#8a4a34" stroke-width="3.4"/>
<path d="M43 6.5 Q45 13 39 22 L33.5 30 L31 28.5 Q33 17 43 6.5Z" fill="#e8e8e8" stroke="#9a9a9a" stroke-width="0.5"/>
<path d="M31.5 35.5 Q35 31 39.5 33 Q42 37 40 41.5 Q35.5 44 32 41Z" fill="#dcdcdc" stroke="#777" stroke-width="0.6"/>
<rect x="4.5" y="45.3" width="1.8" height="1.5" fill="#111"/><rect x="8.3" y="45.3" width="1.8" height="1.5" fill="#111"/><rect x="12.1" y="45.3" width="1.8" height="1.5" fill="#111"/>
</svg>
<div class="a" style="left:750.00px;top:150.00px;width:50.00px;height:50.00px;background:linear-gradient(135deg,#acacb4 0%,#9c9ca6 50%,#84848e 100%);border-top:1.2px solid #ececec;border-left:1.8px solid #ececec;border-bottom:1px solid #3a3a3a;border-right:1px solid #3a3a3a;"></div>
<svg class="a" style="left:750.00px;top:150.00px" width="50" height="50" viewBox="0 0 50 50">
<path d="M16 9.7 L26.3 7.1 L38.7 8.2 L31 11.2Z" fill="#e6e6ee"/>
<path d="M31 11.2 L38.7 8.2 L38.7 31 L31 34Z" fill="#b2b2c6"/>
<rect x="16" y="10.4" width="15" height="13" fill="#c8c8d8"/>
<rect x="17.5" y="12" width="12" height="10" fill="#d2d2e0"/>
<rect x="20.8" y="14.8" width="4.4" height="5" fill="#26262e"/>
<circle cx="28.8" cy="16" r="0.8" fill="#555"/>
<rect x="16.5" y="23.2" width="14.5" height="2.5" fill="#2e2e36"/>
<path d="M13 25.8 L25 25.8 L30 24.8 L30 26.5 L13 27.2Z" fill="#c07a68"/>
<rect x="12" y="26.6" width="13.2" height="14.4" fill="#bcbcd0"/>
<rect x="15.3" y="30.6" width="4.4" height="4.8" fill="#26262e"/>
<path d="M25.2 26.6 L30 25.5 L30 39.5 L25.2 41Z" fill="#2c2c34"/>
<path d="M12 41 L25.2 41 L30 39.5 L31 40.5 L26 42.2 L13 42.2Z" fill="#5a5a66" opacity="0.7"/>
<rect x="4.5" y="45.3" width="1.8" height="1.5" fill="#111"/><rect x="8.3" y="45.3" width="1.8" height="1.5" fill="#111"/><rect x="12.1" y="45.3" width="1.8" height="1.5" fill="#111"/>
</svg>
<div class="a" style="left:750.00px;top:200.00px;width:50.00px;height:50.00px;background:linear-gradient(135deg,#acacb4 0%,#9c9ca6 50%,#84848e 100%);border-top:1.2px solid #ececec;border-left:1.8px solid #ececec;border-bottom:1px solid #3a3a3a;border-right:1px solid #3a3a3a;"></div>
<svg class="a" style="left:750.00px;top:200.00px" width="50" height="50" viewBox="0 0 50 50">
<defs>
<pattern id="chk" width="2.4" height="2.4" patternUnits="userSpaceOnUse"><rect width="2.4" height="2.4" fill="#cacaca"/><rect width="1.2" height="1.2" fill="#5a5a5a"/><rect x="1.2" y="1.2" width="1.2" height="1.2" fill="#5a5a5a"/></pattern>
</defs>
<rect x="6.5" y="6" width="39" height="38.5" fill="url(#chk)"/>
<path d="M8 9.5 L13.5 9.5 L21 18 L21 12 Q21 10.5 19 10.3 L19 9.5 L25 9.5 L25 10.3 Q23.3 10.5 23.3 12 L23.3 23 L21.8 23 L12.8 13 L12.8 21 Q12.8 22 14.5 22.2 L14.5 23 L8.5 23 L8.5 22.2 Q10.4 22 10.4 21 L10.4 11.2 Q9.5 10.3 8 10.3Z" fill="#0a0a0a"/><path d="M9.6 11 L9.6 22.5" stroke="#f0f0f0" stroke-width="0.7"/>
<rect x="14" y="18.5" width="28.5" height="21.5" fill="#e8e8e8" stroke="#222" stroke-width="0.8"/>
<rect x="15" y="19.5" width="26.5" height="3" fill="#777"/>
<rect x="16.5" y="23.5" width="24" height="15.5" fill="#fafafa" stroke="#333" stroke-width="0.6"/>
<rect x="19" y="26" width="10" height="1" fill="#333"/><rect x="20" y="28" width="8" height="1.2" fill="#333"/><rect x="32" y="28.5" width="4" height="1" fill="#333"/>
<rect x="24" y="31" width="3" height="1.2" fill="#333"/><rect x="21" y="33.5" width="9" height="1" fill="#333"/><rect x="20" y="36" width="8" height="1" fill="#333"/>
</svg>
<div class="a" style="left:750.00px;top:250.00px;width:50.00px;height:50.00px;background:linear-gradient(135deg,#acacb4 0%,#9c9ca6 50%,#84848e 100%);border-top:1.2px solid #ececec;border-left:1.8px solid #ececec;border-bottom:1px solid #3a3a3a;border-right:1px solid #3a3a3a;"></div>
<svg class="a" style="left:750.00px;top:250.00px" width="50" height="50" viewBox="0 0 50 50">
<defs><linearGradient id="pb" x1="0" y1="0" x2="1" y2="0"><stop offset="0" stop-color="#a01010"/><stop offset="0.35" stop-color="#e03030"/><stop offset="1" stop-color="#8a0c0c"/></linearGradient></defs>
<path d="M19 10 Q19 6 25.5 6 Q32 6 32.5 10 L32.5 13 L19 13Z" fill="url(#pb)"/>
<rect x="18.2" y="11.5" width="14.8" height="2.5" fill="#c02020"/>
<rect x="19.8" y="13.5" width="11.5" height="24" fill="url(#pb)"/>
<rect x="21.5" y="15.5" width="7" height="1.6" fill="#5a0808"/>
<rect x="23.5" y="18.5" width="4" height="5.5" fill="#e8e8e0"/>
<rect x="19.8" y="37.5" width="11.5" height="5.5" fill="#111"/>
<rect x="4.5" y="45.3" width="1.8" height="1.5" fill="#111"/><rect x="8.3" y="45.3" width="1.8" height="1.5" fill="#111"/><rect x="12.1" y="45.3" width="1.8" height="1.5" fill="#111"/>
</svg>
<div class="a" style="left:750.00px;top:300.00px;width:50.00px;height:50.00px;background:linear-gradient(135deg,#acacb4 0%,#9c9ca6 50%,#84848e 100%);border-top:1.2px solid #ececec;border-left:1.8px solid #ececec;border-bottom:1px solid #3a3a3a;border-right:1px solid #3a3a3a;"></div>
<svg class="a" style="left:751.00px;top:301.00px" width="48" height="48" viewBox="1 1 48 48">
<defs><linearGradient id="ns" x1="0" y1="0" x2="0" y2="1"><stop offset="0" stop-color="#8a8a8c"/><stop offset="0.32" stop-color="#50686a"/><stop offset="0.7" stop-color="#3a7472"/></linearGradient></defs>
<rect x="0" y="0" width="50" height="50" fill="url(#ns)"/>
<path d="M0 35 Q24 27.5 50 33.5 L50 50 L0 50Z" fill="#06201c"/>
<path d="M3 11.5 L11 11.5 L26 26.5 L26 15 Q26 12.6 23.2 12.3 L23.2 11.5 L31.5 11.5 L31.5 12.3 Q28.2 12.6 28.2 15 L28.2 31.2 L25.5 31.2 L9.2 15 L9.2 38.8 Q9.2 41 13.2 41.2 L13.2 42 L3 42 L3 41.2 Q7 41 7 38.8 L7 12.8 Q5.5 12.4 3 12.3Z" fill="#f2f2f2"/>
<text x="13" y="41" font-family="Liberation Serif" font-size="9.6" fill="#eeeeee">etscape</text>
</svg>
<div class="a" style="left:750.00px;top:350.00px;width:50.00px;height:50.00px;background:linear-gradient(135deg,#acacb4 0%,#9c9ca6 50%,#84848e 100%);border-top:1.2px solid #ececec;border-left:1.8px solid #ececec;border-bottom:1px solid #3a3a3a;border-right:1px solid #3a3a3a;"></div>
<svg class="a" style="left:750.00px;top:350.00px" width="50" height="50" viewBox="0 0 50 50">
<defs>
<linearGradient id="cdl" x1="0" y1="0" x2="1" y2="1"><stop offset="0" stop-color="#4a4a58"/><stop offset="0.6" stop-color="#22222a"/><stop offset="1" stop-color="#3a3a4a"/></linearGradient>
<linearGradient id="cdt" x1="0" y1="0" x2="1" y2="0"><stop offset="0" stop-color="#707080"/><stop offset="1" stop-color="#4a4a58"/></linearGradient>
</defs>
<path d="M8 12.4 L21 6.6 L32.7 12 L20.5 17.8Z" fill="url(#cdt)"/>
<path d="M8.8 12.9 L20.5 17.8 L20.5 42 L8.8 35.8Z" fill="url(#cdl)"/>
<path d="M20.5 17.8 L32.7 12 L32.7 36.5 L20.5 42Z" fill="#303038"/>
<path d="M8 12.4 L8 36 L20.5 42.5" stroke="#a8a8b8" stroke-width="0.6" fill="none"/>
<path d="M8 12.4 L21 6.6" stroke="#b0b0c0" stroke-width="0.6"/>
<path d="M21 19.5 L38 15 L40.3 16 L40.3 27.7 L27.3 34 L21 30Z" fill="#18181e"/>
<path d="M22 20 L37 16 L37 17.3 L22 21.3Z" fill="#c09080" opacity="0.8"/>
<path d="M22.5 22 L36 18.3" stroke="#dddddd" stroke-width="0.5"/>
<path d="M26.8 21.9 L40.3 16 L40.3 27.7 L27.3 34Z" fill="#3a3a46" stroke="#c8c8d4" stroke-width="0.7"/>
<path d="M32.5 24 L37.6 21.8 L37.6 23 L32.5 25.2Z" fill="#d0d0d8"/>
<path d="M20.5 42 L32.7 36.5 L35 37.5 L22 43.5Z" fill="#55556a" opacity="0.6"/>
</svg>
<div class="a" style="left:750.00px;top:550.00px;width:50.00px;height:50.00px;background:linear-gradient(135deg,#acacb4 0%,#9c9ca6 50%,#84848e 100%);border-top:1.2px solid #ececec;border-left:1.8px solid #ececec;border-bottom:1px solid #3a3a3a;border-right:1px solid #3a3a3a;"></div>
<svg class="a" style="left:750.00px;top:550.00px" width="50" height="50" viewBox="0 0 50 50">
<defs>
<linearGradient id="rg1" x1="0" y1="0" x2="1" y2="1"><stop offset="0" stop-color="#7ae06a"/><stop offset="0.5" stop-color="#3cb83a"/><stop offset="1" stop-color="#1a8a22"/></linearGradient>
<linearGradient id="rg2" x1="0" y1="0" x2="1" y2="1"><stop offset="0" stop-color="#1e7a24"/><stop offset="0.5" stop-color="#34a838"/><stop offset="1" stop-color="#20882a"/></linearGradient>
</defs>
<g stroke="#0c3a1c" stroke-width="0.9" stroke-linejoin="round">
<path d="M12.8 12.9 L17.9 7.8 L25.6 7 L24.9 14.7 L21.6 19.5 L13.5 15.8Z" fill="url(#rg1)"/>
<path d="M26 6.7 L32.2 6.3 L35.5 9.6 L41 10 L37.4 18.8 L25.6 18.4 L27.5 15.8Z" fill="url(#rg2)"/>
<path d="M31.9 22.8 L39.9 18.8 L43.9 22 L44 27.2 L42.1 30.9 L37.7 30.1 L31.5 24.3Z" fill="url(#rg1)"/>
<path d="M26 33.8 L29.7 28.3 L30.4 30.9 L41.4 30.5 L38.5 38.2 L30.4 38.9 L29.7 41.9Z" fill="url(#rg1)"/>
<path d="M13.5 31.6 L24.5 30.9 L24.9 39.3 L15.7 38.9 L12.8 34.5Z" fill="url(#rg2)"/>
<path d="M6.9 19.5 L16.8 19.9 L21.6 25.7 L17.2 29.4 L14.3 33.8 L8.4 27.2Z" fill="url(#rg1)"/>
</g>
</svg>
<div class="a" style="left:0.00px;top:550.00px;width:50.00px;height:50.00px;background:linear-gradient(135deg,#acacb4 0%,#9c9ca6 50%,#84848e 100%);border-top:1.2px solid #ececec;border-left:1.8px solid #ececec;border-bottom:1px solid #3a3a3a;border-right:1px solid #3a3a3a;"></div>
<svg class="a" style="left:0.00px;top:550.00px" width="50" height="50" viewBox="0 0 50 50"><g transform="translate(0,0)">
<defs><linearGradient id="ms" x1="0" y1="0" x2="1" y2="1"><stop offset="0" stop-color="#0a1a8a"/><stop offset="0.6" stop-color="#2a40b8"/><stop offset="1" stop-color="#5a6ad0"/></linearGradient></defs>
<path d="M31 14 L39 20 L41 23 L41 36 L38 40 L31 42Z" fill="#e6e6ea"/>
<rect x="9" y="12" width="23" height="28.5" rx="1" fill="#f0f0f4"/>
<rect x="11" y="15" width="19" height="21.5" fill="url(#ms)"/>
<path d="M16 40.5 L35 40.5 L36 44 L15 44Z" fill="#e2e2e6"/>
</g></svg>
<div class="a" style="left:1.00px;top:551.00px;width:48.00px;height:7.00px;background:#000"></div>
<div class="t" style="left:1px;top:551.9px;width:48px;text-align:center;font-size:6.1px;font-weight:bold;color:#fff">wterm</div>
<div class="a" style="left:50.00px;top:550.00px;width:50.00px;height:50.00px;background:linear-gradient(135deg,#acacb4 0%,#9c9ca6 50%,#84848e 100%);border-top:1.2px solid #ececec;border-left:1.8px solid #ececec;border-bottom:1px solid #3a3a3a;border-right:1px solid #3a3a3a;"></div>
<svg class="a" style="left:51.00px;top:551.00px" width="48" height="49" viewBox="1 1 48 49"><g transform="translate(0,5)">
<defs><linearGradient id="ns2" x1="0" y1="0" x2="0" y2="1"><stop offset="0" stop-color="#8a8a8c"/><stop offset="0.32" stop-color="#50686a"/><stop offset="0.7" stop-color="#3a7472"/></linearGradient></defs>
<rect x="0" y="0" width="50" height="50" fill="url(#ns2)"/>
<path d="M0 35 Q24 27.5 50 33.5 L50 50 L0 50Z" fill="#06201c"/>
<path d="M3 11.5 L11 11.5 L26 26.5 L26 15 Q26 12.6 23.2 12.3 L23.2 11.5 L31.5 11.5 L31.5 12.3 Q28.2 12.6 28.2 15 L28.2 31.2 L25.5 31.2 L9.2 15 L9.2 38.8 Q9.2 41 13.2 41.2 L13.2 42 L3 42 L3 41.2 Q7 41 7 38.8 L7 12.8 Q5.5 12.4 3 12.3Z" fill="#f2f2f2"/>
<text x="13" y="41" font-family="Liberation Serif" font-size="9.6" fill="#eeeeee">etscape</text>
</g></svg>
<div class="a" style="left:51.00px;top:551.00px;width:48.00px;height:7.00px;background:#000"></div>
<div class="t" style="left:51px;top:551.9px;width:48px;text-align:center;font-size:6.1px;font-weight:bold;color:#fff">Mozilla</div>
<div class="a" style="left:100.00px;top:550.00px;width:50.00px;height:50.00px;background:linear-gradient(135deg,#acacb4 0%,#9c9ca6 50%,#84848e 100%);border-top:1.2px solid #ececec;border-left:1.8px solid #ececec;border-bottom:1px solid #3a3a3a;border-right:1px solid #3a3a3a;"></div>
<svg class="a" style="left:100.00px;top:550.00px" width="50" height="50" viewBox="0 0 50 50"><g transform="translate(0,4)">
<defs>
<pattern id="chk2" width="2.4" height="2.4" patternUnits="userSpaceOnUse"><rect width="2.4" height="2.4" fill="#cacaca"/><rect width="1.2" height="1.2" fill="#5a5a5a"/><rect x="1.2" y="1.2" width="1.2" height="1.2" fill="#5a5a5a"/></pattern>
</defs>
<rect x="6.5" y="6" width="39" height="38.5" fill="url(#chk2)"/>
<path d="M8 9.5 L13.5 9.5 L21 18 L21 12 Q21 10.5 19 10.3 L19 9.5 L25 9.5 L25 10.3 Q23.3 10.5 23.3 12 L23.3 23 L21.8 23 L12.8 13 L12.8 21 Q12.8 22 14.5 22.2 L14.5 23 L8.5 23 L8.5 22.2 Q10.4 22 10.4 21 L10.4 11.2 Q9.5 10.3 8 10.3Z" fill="#0a0a0a"/><path d="M9.6 11 L9.6 22.5" stroke="#f0f0f0" stroke-width="0.7"/>
<rect x="14" y="18.5" width="28.5" height="21.5" fill="#e8e8e8" stroke="#222" stroke-width="0.8"/>
<rect x="15" y="19.5" width="26.5" height="3" fill="#777"/>
<rect x="16.5" y="23.5" width="24" height="15.5" fill="#fafafa" stroke="#333" stroke-width="0.6"/>
<rect x="19" y="26" width="10" height="1" fill="#333"/><rect x="20" y="28" width="8" height="1.2" fill="#333"/><rect x="32" y="28.5" width="4" height="1" fill="#333"/>
<rect x="24" y="31" width="3" height="1.2" fill="#333"/><rect x="21" y="33.5" width="9" height="1" fill="#333"/><rect x="20" y="36" width="8" height="1" fill="#333"/>
</g></svg>
<div class="a" style="left:101.00px;top:551.00px;width:48.00px;height:7.00px;background:#000"></div>
<div class="t" style="left:101px;top:551.9px;width:48px;text-align:center;font-size:6.1px;font-weight:bold;color:#fff">...91.meta.shtml</div>
</body></html>
